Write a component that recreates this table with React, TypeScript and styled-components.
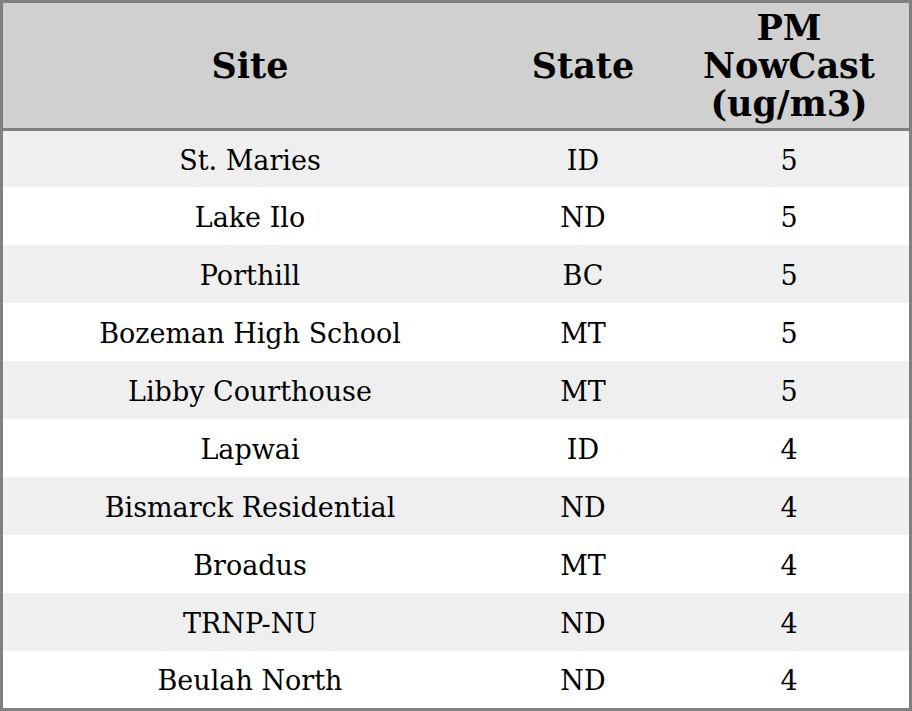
import styled, { createGlobalStyle } from "styled-components";

const GlobalStyle = createGlobalStyle`
  html, body {
    margin: 0;
    padding: 0;
    background: #ffffff;
  }
`;

const Table = styled.table`
  width: 912px;
  border-collapse: collapse;
  border: 3px solid #808080;
  font-family: "DejaVu Serif", serif;
  color: #000000;
  table-layout: fixed;
`;

const HeadRow = styled.tr`
  height: 128px;
  background-color: #d0d0d0;
  border-bottom: 3px solid #808080;
`;

const HeadCell = styled.th<{ $width: number }>`
  width: ${(props) => props.$width}px;
  padding: 0;
  font-size: 35px;
  line-height: 38px;
  font-weight: bold;
  text-align: center;
  vertical-align: middle;
`;

const Row = styled.tr<{ $striped: boolean }>`
  height: 58px;
  background-color: ${(props) => (props.$striped ? "#efefef" : "#ffffff")};

  &:first-child {
    height: 57.5px;
  }

  &:last-child {
    height: 58.5px;
  }
`;

const Cell = styled.td`
  padding: 3px 0 0;
  font-size: 27px;
  line-height: 32px;
  text-align: center;
  vertical-align: middle;
`;

interface Site {
  name: string;
  state: string;
  pm: number;
}

const sites: Site[] = [
  { name: "St. Maries", state: "ID", pm: 5 },
  { name: "Lake Ilo", state: "ND", pm: 5 },
  { name: "Porthill", state: "BC", pm: 5 },
  { name: "Bozeman High School", state: "MT", pm: 5 },
  { name: "Libby Courthouse", state: "MT", pm: 5 },
  { name: "Lapwai", state: "ID", pm: 4 },
  { name: "Bismarck Residential", state: "ND", pm: 4 },
  { name: "Broadus", state: "MT", pm: 4 },
  { name: "TRNP-NU", state: "ND", pm: 4 },
  { name: "Beulah North", state: "ND", pm: 4 },
];

function App() {
  return (
    <>
      <GlobalStyle />
      <Table>
        <thead>
          <HeadRow>
            <HeadCell $width={494}>Site</HeadCell>
            <HeadCell $width={172}>State</HeadCell>
            <HeadCell $width={240}>
              PM
              <br />
              NowCast
              <br />
              (ug/m3)
            </HeadCell>
          </HeadRow>
        </thead>
        <tbody>
          {sites.map((site, i) => (
            <Row key={site.name} $striped={i % 2 === 0}>
              <Cell>{site.name}</Cell>
              <Cell>{site.state}</Cell>
              <Cell>{site.pm}</Cell>
            </Row>
          ))}
        </tbody>
      </Table>
    </>
  );
}

export default App;
